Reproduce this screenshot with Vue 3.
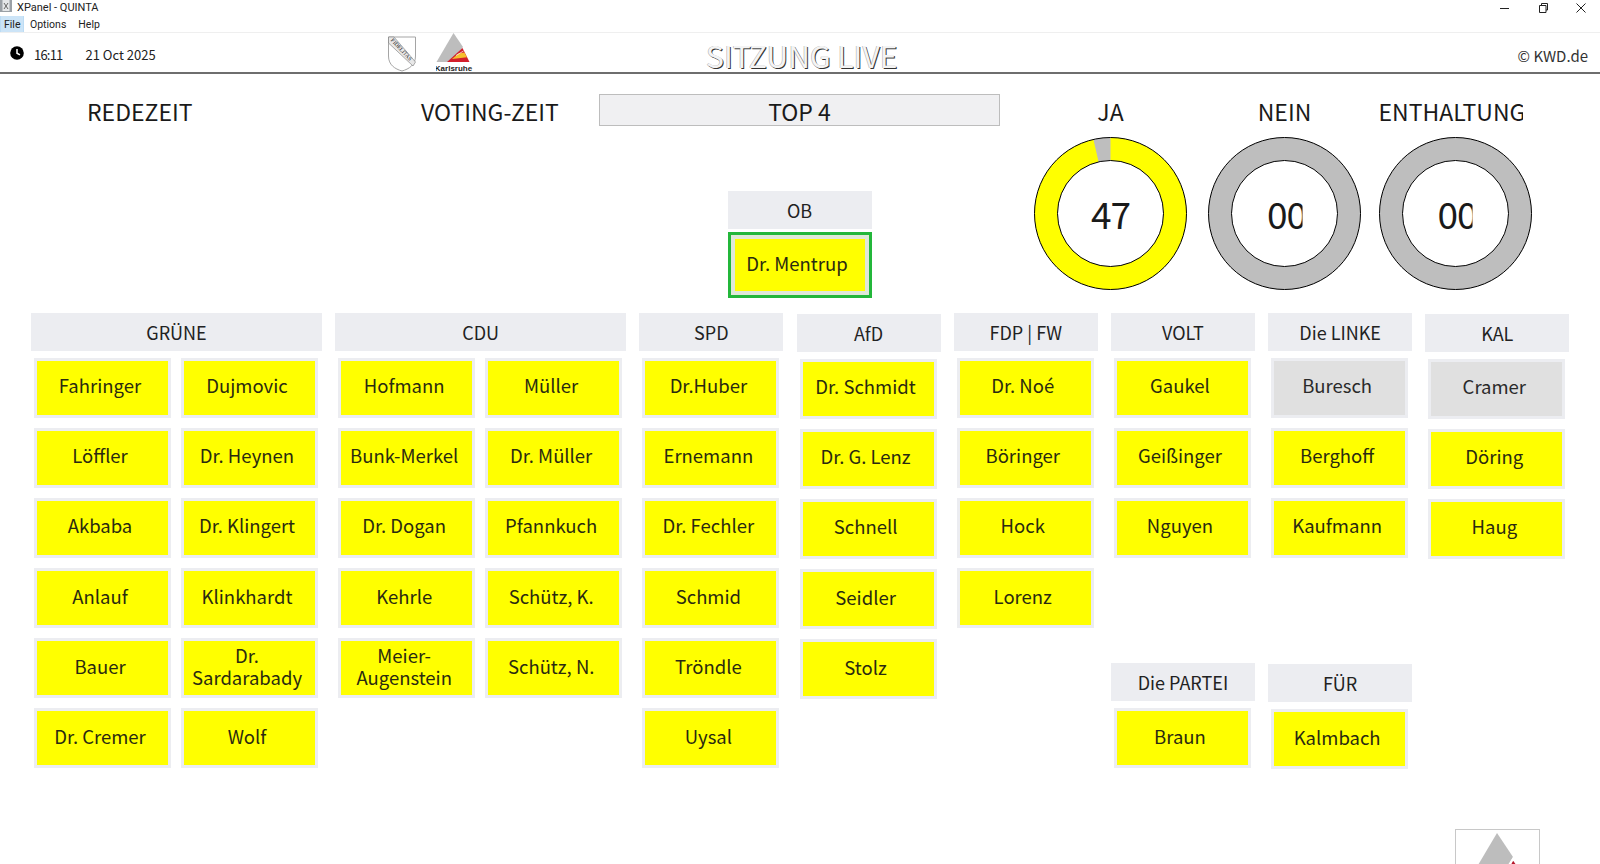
<script setup>
const groups = [
  { name: 'GRÜNE', wide: true, cards: ['Fahringer', 'Dujmovic', 'Löffler', 'Dr. Heynen', 'Akbaba', 'Dr. Klingert', 'Anlauf', 'Klinkhardt', 'Bauer', 'Dr. Sardarabady', 'Dr. Cremer', 'Wolf'] },
  { name: 'CDU', wide: true, cards: ['Hofmann', 'Müller', 'Bunk-Merkel', 'Dr. Müller', 'Dr. Dogan', 'Pfannkuch', 'Kehrle', 'Schütz, K.', 'Meier-Augenstein', 'Schütz, N.'] },
  { name: 'SPD', cards: ['Dr.Huber', 'Ernemann', 'Dr. Fechler', 'Schmid', 'Tröndle', 'Uysal'] },
  { name: 'AfD', shift: true, cards: ['Dr. Schmidt', 'Dr. G. Lenz', 'Schnell', 'Seidler', 'Stolz'] },
  { name: 'FDP | FW', cards: ['Dr. Noé', 'Böringer', 'Hock', 'Lorenz'] },
  { name: 'VOLT', cards: ['Gaukel', 'Geißinger', 'Nguyen'], sub: { name: 'Die PARTEI', cards: ['Braun'] } },
  { name: 'Die LINKE', absent: ['Buresch'], cards: ['Buresch', 'Berghoff', 'Kaufmann'], sub: { name: 'FÜR', shift: true, cards: ['Kalmbach'] } },
  { name: 'KAL', shift: true, absent: ['Cramer'], cards: ['Cramer', 'Döring', 'Haug'] },
]
const votes = [
  { label: 'JA', value: '47', yes: true },
  { label: 'NEIN', value: '00' },
  { label: 'ENTHALTUNG', value: '00' },
]
// Ring segment from the top, running clockwise to the slice left open for missing votes
const R = 76, r = 53, C = 76.5, A = (-13 * Math.PI) / 180
const pt = (rad) => `${(C + rad * Math.sin(A)).toFixed(2)} ${(C - rad * Math.cos(A)).toFixed(2)}`
const yesPath = `M${C} ${C - R}A${R} ${R} 0 1 1 ${pt(R)}L${pt(r)}A${r} ${r} 0 1 0 ${C} ${C - r}Z`
</script>

<template>
  <div class="app">
    <div class="titlebar">
      <div class="title">
        <svg class="app-icon" width="13" height="13" viewBox="0 0 13 13">
          <rect x="0" y="0" width="12" height="12" fill="#9aa0a6" />
          <rect x="2.5" y="0" width="7" height="11" fill="#e4e6e8" />
          <path d="M4 3l4 6M8 3L4 9" stroke="#666" fill="none" />
        </svg>
        <span>XPanel - QUINTA</span>
      </div>
      <div class="win-buttons">
        <svg width="12" height="12" viewBox="0 0 12 12"><path d="M1 6.5h9" stroke="#222" fill="none" /></svg>
        <svg width="12" height="12" viewBox="0 0 12 12"><path d="M2.5 3.5h6.5v7H2.5zM4.5 3.5V1.5h6v6.5H9" stroke="#222" fill="none" /></svg>
        <svg width="12" height="12" viewBox="0 0 12 12"><path d="M1.5 1.5l9 9M10.5 1.5l-9 9" stroke="#222" fill="none" /></svg>
      </div>
    </div>

    <div class="menubar">
      <span class="menu active">File</span>
      <span class="menu">Options</span>
      <span class="menu">Help</span>
    </div>

    <header class="header">
      <div class="clock-group">
        <svg class="clock" width="14" height="14" viewBox="0 0 14 14">
          <circle cx="7" cy="7" r="6.8" fill="#000" />
          <path d="M7 3v4.2l3 1.6" stroke="#fff" stroke-width="1.5" fill="none" />
        </svg>
        <span class="time">16:11</span>
        <span class="date">21 Oct 2025</span>
      </div>
      <div class="logos">
        <svg width="28" height="36" viewBox="0 0 28 36">
          <path d="M.5 1H27.5V20C27.5 29 21 33 14 35C7 33 .5 29 .5 20Z" fill="#fff" stroke="#a5a5a5" />
          <path d="M.5 1H6L27.5 26L25 30L.5 7Z" fill="#e8e8e8" stroke="#777" stroke-width=".6" />
          <text x="0" y="0" transform="translate(2.6 4.6) rotate(47)" class="motto">FIDELITAS</text>
        </svg>
        <svg width="38" height="40" viewBox="0 0 38 40">
          <path d="M17.5 0L0.5 29H17L27 14Z" fill="#bdbdbd" />
          <path d="M26.5 15L33.5 29H11Z" fill="#d21f2b" />
          <path d="M22.5 20.5L28.4 19.5L31 24.3L16 26Z" fill="#f6bf2d" />
          <path d="M20 22.5L27.5 18" stroke="#fff" stroke-width=".7" fill="none" />
          <text x="17.5" y="38" text-anchor="middle" class="city">Karlsruhe</text>
        </svg>
      </div>
      <div class="page-title">SITZUNG LIVE</div>
      <div class="copyright">© KWD.de</div>
    </header>

    <main class="main">
      <section class="top">
        <div class="label redezeit">REDEZEIT</div>
        <div class="label voting">VOTING-ZEIT</div>
        <div class="center">
          <div class="agenda">TOP 4</div>
          <div class="ob">
            <div class="group-head">OB</div>
            <div class="card chair"><span>Dr. Mentrup</span></div>
          </div>
        </div>
        <div class="votes">
          <div v-for="v in votes" :key="v.label" class="vote">
            <div class="label vote-label">{{ v.label }}</div>
            <div class="donut">
              <svg width="153" height="153" viewBox="0 0 153 153">
                <circle cx="76.5" cy="76.5" r="64.5" fill="none" stroke="#bebebe" stroke-width="23" />
                <path v-if="v.yes" :d="yesPath" fill="#ffff00" />
                <circle cx="76.5" cy="76.5" r="76" fill="none" stroke="#000" stroke-width="1" />
                <circle cx="76.5" cy="76.5" r="53" fill="none" stroke="#000" stroke-width="1" />
              </svg>
              <span class="count">{{ v.value }}</span>
            </div>
          </div>
        </div>
      </section>

      <section class="groups">
        <div v-for="g in groups" :key="g.name" class="group" :class="{ wide: g.wide, shift: g.shift }">
          <div class="group-head">{{ g.name }}</div>
          <div class="cards">
            <div v-for="c in g.cards" :key="c" class="card" :class="{ absent: g.absent && g.absent.includes(c) }">
              <span>{{ c }}</span>
            </div>
          </div>
          <div v-if="g.sub" class="sub" :class="{ shift: g.sub.shift }">
            <div class="group-head">{{ g.sub.name }}</div>
            <div class="cards">
              <div v-for="c in g.sub.cards" :key="c" class="card"><span>{{ c }}</span></div>
            </div>
          </div>
        </div>
      </section>
    </main>

    <div class="corner-logo">
      <svg width="82" height="34" viewBox="0 0 82 34">
        <path d="M41 3L12 52H41L57 27Z" fill="#bdbdbd" />
        <path d="M57 29L80 60H40Z" fill="#b5172b" stroke="#fff" stroke-width="2" />
      </svg>
    </div>
  </div>
</template>

<style scoped>
.app {
  position: relative;
  width: 1600px;
  height: 864px;
  overflow: hidden;
  background: #fff;
  color: #1a1a1a;
  font-family: "Noto Sans CJK SC", "Noto Sans", sans-serif;
}
.titlebar {
  height: 16px;
  display: flex;
  justify-content: space-between;
  align-items: center;
}
.title {
  display: flex;
  align-items: center;
  gap: 4px;
  font-family: Roboto, sans-serif;
  font-size: 11px;
  line-height: 14px;
  color: #222;
}
.app-icon {
  margin-top: -3px;
}
.win-buttons {
  display: flex;
  gap: 26px;
  padding-right: 13px;
}
.menubar {
  height: 16px;
  display: flex;
  align-items: center;
  border-bottom: 1px solid #efefef;
  font-family: Roboto, sans-serif;
  font-size: 10.5px;
  color: #222;
}
.menu {
  height: 16px;
  line-height: 18px;
  padding: 0 6px;
}
.menu.active {
  box-sizing: border-box;
  width: 24px;
  padding: 0 3px;
  background: #cce4f7;
  border: 1px solid #bcdcf4;
  border-width: 0 1px;
}
.header {
  position: relative;
  height: 39px;
  display: flex;
  align-items: center;
  border-bottom: 2px solid #6e6e6e;
}
.clock-group {
  width: 388px;
  display: flex;
  align-items: center;
  padding-left: 10px;
  padding-top: 4px;
  box-sizing: border-box;
  font-size: 13px;
  line-height: 18px;
  color: #222;
}
.clock {
  margin-top: -3px;
}
.time {
  margin-left: 10px;
  letter-spacing: -0.8px;
}
.date {
  margin-left: 23px;
}
.logos {
  display: flex;
  align-items: flex-start;
  gap: 20px;
  width: 318px;
  height: 39px;
}
.logos svg:first-child {
  margin-top: 3px;
}
.motto {
  font-family: "Liberation Serif", serif;
  font-size: 5.6px;
  fill: #222;
}
.city {
  font-family: "Liberation Sans", sans-serif;
  font-weight: 700;
  font-size: 8px;
  fill: #222;
}
.page-title {
  width: 191px;
  padding-top: 5px;
  font-size: 30px;
  line-height: 30px;
  white-space: nowrap;
  color: #f4f4f4;
  text-shadow: 1px 1px 0 #333, -0.5px -0.5px 0 #aaa;
}
.copyright {
  margin-left: auto;
  padding-right: 12px;
  padding-top: 7px;
  font-size: 15px;
  line-height: 22px;
  color: #333;
}
.main {
  padding-left: 31px;
}
.top {
  height: 238.5px;
  display: flex;
  align-items: flex-start;
}
.label {
  height: 32px;
  margin-top: 20px;
  font-size: 23px;
  line-height: 34px;
  white-space: nowrap;
}
.redezeit {
  width: 334px;
  margin-left: 56px;
}
.voting {
  width: 178px;
}
.center {
  width: 401px;
  display: flex;
  flex-direction: column;
  align-items: center;
}
.agenda {
  box-sizing: border-box;
  width: 100%;
  height: 32px;
  margin-top: 20px;
  background: #f0f0f2;
  border: 1px solid #bdbdbd;
  text-align: center;
  font-size: 23px;
  line-height: 32px;
}
.ob {
  width: 144px;
  margin-top: 65px;
}
.votes {
  display: flex;
  margin-left: 34px;
  gap: 21px;
}
.vote {
  width: 153px;
  display: flex;
  flex-direction: column;
}
.vote:last-child {
  margin-left: -3.5px;
}
.vote-label {
  text-align: center;
}
.vote:last-child .vote-label {
  width: 144px;
  overflow: hidden;
  text-align: left;
}
.donut {
  position: relative;
  width: 153px;
  height: 153px;
  margin-top: 11px;
}
.donut svg {
  display: block;
}
.count {
  position: absolute;
  top: 48px;
  left: 50%;
  transform: translateX(-50%);
  width: 35px;
  overflow: hidden;
  white-space: nowrap;
  font-size: 37px;
  letter-spacing: -1px;
  line-height: 56px;
}
.vote:first-child .count {
  width: 40px;
  text-align: center;
}
.groups {
  display: flex;
  gap: 13.2px;
  align-items: stretch;
}
.group {
  width: 144px;
  display: flex;
  flex-direction: column;
}
.group.wide {
  width: 291px;
}
.group.shift {
  padding-top: 1px;
}
.group-head {
  height: 38px;
  background: #ecedf1;
  text-align: center;
  font-size: 18px;
  line-height: 39px;
  color: #222;
}
.cards {
  display: grid;
  grid-template-columns: 137px;
  row-gap: 10.2px;
  column-gap: 10px;
  padding: 7px 4px 0 3px;
}
.wide .cards {
  grid-template-columns: 137px 137px;
}
.sub {
  margin-top: auto;
}
.sub.shift {
  margin-bottom: -1px;
}
.card {
  box-sizing: border-box;
  height: 60px;
  padding: 0 5px 0 0;
  display: flex;
  align-items: center;
  justify-content: center;
  background: #ffff00;
  border: 3px solid #ecedf1;
  text-align: center;
  font-size: 18.5px;
  line-height: 22px;
  color: #2a2a10;
}
.card span {
  max-width: 118px;
  padding-bottom: 5px;
}
.card.absent {
  background: #e0e0e0;
  color: #2a2a2a;
}
.card.chair {
  width: 144px;
  height: 66px;
  margin-top: 3px;
  border: 3px solid #23b73a;
  box-shadow: inset 0 0 0 4px #dfe8d8;
}
.corner-logo {
  position: absolute;
  left: 1455px;
  top: 829px;
  box-sizing: border-box;
  width: 85px;
  height: 40px;
  border: 1px solid #c8c8c8;
  background: #fff;
}
.corner-logo svg {
  display: block;
}
</style>

<style>
html, body {
  margin: 0;
  background: #fff;
  overflow: hidden;
}
</style>
